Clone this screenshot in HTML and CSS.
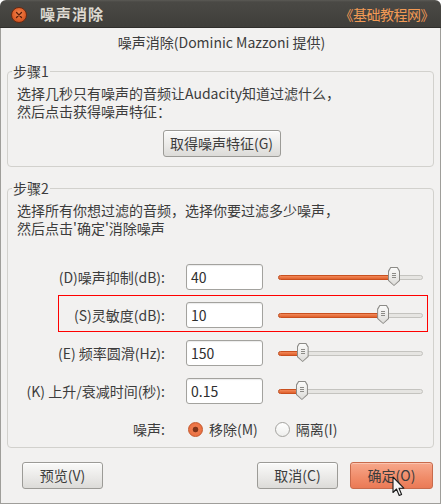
FILE: index.html
```html
<!DOCTYPE html>
<html lang="zh-CN">
<head>
<meta charset="utf-8">
<title>噪声消除</title>
<link rel="stylesheet" href="styles.css">
</head>
<body>
<div class="window">
  <div class="titlebar">
    <span class="close"><svg width="8" height="8" viewBox="0 0 8 8"><path d="M1.5 1.5L6.5 6.5M6.5 1.5L1.5 6.5" stroke="#5a1e0a" stroke-width="1.3" stroke-linecap="round"/></svg></span>
    <span class="title">噪声消除</span>
    <span class="watermark">《基础教程网》</span>
  </div>
  <div class="main">
    <div class="heading">噪声消除(Dominic Mazzoni 提供)</div>

    <fieldset class="group">
      <legend>步骤1</legend>
      <div class="group-body step1">
        <div class="desc">选择几秒只有噪声的音频让Audacity知道过滤什么，</div>
        <div class="desc">然后点击获得噪声特征：</div>
        <div class="center"><button class="btn btn-profile">取得噪声特征(G)</button></div>
      </div>
    </fieldset>

    <fieldset class="group">
      <legend>步骤2</legend>
      <div class="group-body step2">
        <div class="desc">选择所有你想过滤的音频，选择你要过滤多少噪声，</div>
        <div class="desc">然后点击'确定'消除噪声</div>
        <div class="rows">
          <div class="row">
            <label class="lbl">(D)噪声抑制(dB):</label>
            <div class="input">40</div>
            <div class="slider"><div class="track"><div class="fill" style="width:80%"></div></div><span class="thumb" style="left:80%"><i></i></span></div>
          </div>
          <div class="row highlight">
            <label class="lbl">(S)灵敏度(dB):</label>
            <div class="input">10</div>
            <div class="slider"><div class="track"><div class="fill" style="width:72.5%"></div></div><span class="thumb" style="left:72.5%"><i></i></span></div>
          </div>
          <div class="row">
            <label class="lbl">(E) 频率圆滑(Hz):</label>
            <div class="input">150</div>
            <div class="slider"><div class="track"><div class="fill" style="width:17%"></div></div><span class="thumb" style="left:17%"><i></i></span></div>
          </div>
          <div class="row">
            <label class="lbl">(K) 上升/衰减时间(秒):</label>
            <div class="input">0.15</div>
            <div class="slider"><div class="track"><div class="fill" style="width:16.5%"></div></div><span class="thumb" style="left:16.5%"><i></i></span></div>
          </div>
          <div class="row radio-row">
            <label class="lbl">噪声:</label>
            <div class="radios">
              <span class="radio on"></span><span class="rtext">移除(M)</span>
              <span class="radio"></span><span class="rtext">隔离(I)</span>
            </div>
          </div>
        </div>
      </div>
    </fieldset>

    <div class="buttons">
      <button class="btn btn-preview">预览(V)</button>
      <span class="spacer"></span>
      <button class="btn btn-cancel">取消(C)</button>
      <button class="btn btn-ok">确定(O)
        <svg class="cursor" width="13" height="21" viewBox="0 0 13 21"><path d="M1 1 L1 16.5 L4.5 13 L7.2 19.5 L9.6 18.5 L7 12.2 L11.8 12.2 Z" fill="#f4f4f4" stroke="#1a1a1a" stroke-width="1.1" stroke-linejoin="round"/></svg>
      </button>
    </div>
  </div>
</div>
</body>
</html>
```

FILE: styles.css
```css
* { box-sizing: border-box; }
html, body { margin: 0; padding: 0; background: #ffffff; }
body {
  font-family: "Noto Sans CJK SC", "Noto Sans", sans-serif;
  font-size: 14px;
  color: #3c3c3c;
}
.window {
  width: 441px;
  height: 504px;
  display: flex;
  flex-direction: column;
}
.titlebar {
  height: 28px;
  flex: none;
  display: flex;
  align-items: center;
  padding: 0 7px 0 11px;
  border-radius: 6px 6px 0 0;
  background: linear-gradient(#5b5a55 0, #4a4945 2px, #3f3e3a 100%);
  border-bottom: 1px solid #2f2e2b;
}
.close {
  width: 16px;
  height: 16px;
  border-radius: 50%;
  background: radial-gradient(circle at 50% 40%, #f5874f 0, #e0602a 55%, #b8441a 100%);
  border: 1px solid #6a2a12;
  display: flex;
  align-items: center;
  justify-content: center;
  margin-top: 2px;
}
.close svg { display: block; }
.title {
  margin-left: 13px;
  font-weight: bold;
  font-size: 15px;
  letter-spacing: 1px;
  color: #dcd8cf;
}
.watermark {
  margin-left: auto;
  color: #f29a55;
  font-size: 14px;
  letter-spacing: -0.5px;
}
.main {
  flex: 1;
  background: #f2f1f0;
  border: 1px solid #9f9e9a;
  border-top: none;
  display: flex;
  flex-direction: column;
}
.heading {
  text-align: center;
  line-height: 18px;
  margin-top: 5px;
  padding-left: 2px;
}
.group {
  margin: 11px 6px 0;
  padding: 0;
  border: 1px solid #d2d1cd;
  border-radius: 4px;
  min-width: 0;
}
.group + .group { margin-top: 12px; }
.group legend {
  margin-left: 4px;
  padding: 0 1px;
  line-height: 18px;
}
.group-body { padding: 4px 9px 9px 9px; }
.desc {
  margin: 0;
  height: 18px;
  line-height: 18px;
}
.center { display: flex; justify-content: center; margin-top: 10px; padding-left: 2px; }
.btn {
  font-family: inherit;
  font-size: 14px;
  color: #3c3c3c;
  height: 27px;
  padding: 0;
  border: 1px solid #9c9b97;
  border-radius: 3px;
  background: linear-gradient(#fafaf9, #e9e8e6 60%, #dcdbd8);
  box-shadow: inset 0 1px 0 #ffffff;
  line-height: 25px;
}
.btn-profile { width: 118px; }
.step2 { padding: 4px 0 5px 0; }
.step2 .desc { padding-left: 9px; }
.rows {
  margin-top: 27px;
  display: flex;
  flex-direction: column;
  gap: 12px;
}
.row {
  position: relative;
  display: grid;
  grid-template-columns: 158px 77px 145px;
  column-gap: 20px;
  height: 26px;
  align-items: center;
}
.lbl {
  text-align: right;
  white-space: nowrap;
  padding-right: 1px;
  line-height: 18px;
}
.input {
  height: 26px;
  border: 1px solid #a3a29e;
  border-radius: 3px;
  background: #ffffff;
  box-shadow: inset 0 1px 1px rgba(0,0,0,0.08);
  padding-left: 4px;
  line-height: 24px;
  color: #2e2e2e;
}
.slider {
  position: relative;
  margin-left: -5px;
  width: 145px;
  height: 26px;
  display: flex;
  align-items: center;
}
.track {
  width: 100%;
  height: 5px;
  border-radius: 3px;
  background: #e6e5e2;
  border: 1px solid #c4c3bf;
  position: relative;
}
.fill {
  position: absolute;
  left: -1px;
  top: -1px;
  bottom: -1px;
  border-radius: 3px;
  background: linear-gradient(#f28a5a, #e0602c);
  border: 1px solid #c9501f;
}
.thumb {
  position: absolute;
  top: 3px;
  width: 12px;
  height: 19px;
  margin-left: -6px;
  clip-path: polygon(0 20%, 20% 0, 80% 0, 100% 20%, 100% 72%, 50% 100%, 0 72%);
  background: #8c8b87;
}
.thumb::before {
  content: "";
  position: absolute;
  inset: 1px;
  clip-path: polygon(0 20%, 20% 0, 80% 0, 100% 20%, 100% 72%, 50% 100%, 0 72%);
  background: linear-gradient(#fbfbfa, #dddcd9);
}
.thumb i {
  position: absolute;
  left: 4px;
  top: 6px;
  width: 4px;
  height: 5px;
  border-top: 1px solid #8c8b87;
  border-bottom: 1px solid #8c8b87;
}
.thumb i::after {
  content: "";
  position: absolute;
  left: 0; right: 0;
  top: 1px;
  border-top: 1px solid #8c8b87;
}
.highlight::after {
  content: "";
  position: absolute;
  left: 50px;
  right: 5px;
  top: -7px;
  bottom: -4px;
  border: 1px solid #ff0000;
  pointer-events: none;
}
.radios {
  grid-column: 2 / 4;
  display: flex;
  align-items: center;
  padding-left: 2px;
}
.radio {
  width: 15px;
  height: 15px;
  border-radius: 50%;
  border: 1px solid #a3a29e;
  background: linear-gradient(#ffffff, #eeeeec);
  flex: none;
}
.radio.on {
  border-color: #c4562a;
  background: radial-gradient(circle, #7e3318 0, #7e3318 2.5px, #ee7a4c 3.2px, #e86a3a 100%);
}
.rtext { margin-left: 6px; margin-right: 17px; }
.buttons {
  display: flex;
  margin-top: 14px;
  padding: 0 7px 0 21px;
}
.spacer { flex: 1; }
.btn-preview, .btn-cancel { width: 81px; }
.btn-cancel { margin-right: 12px; }
.btn-ok {
  width: 83px;
  position: relative;
  border-color: #c86b4c;
  background: linear-gradient(#f7a88c, #f08b68 60%, #ea7a56);
  box-shadow: inset 0 1px 0 #fbc4b0;
}
.cursor {
  position: absolute;
  left: 41px;
  top: 13px;
}
```
